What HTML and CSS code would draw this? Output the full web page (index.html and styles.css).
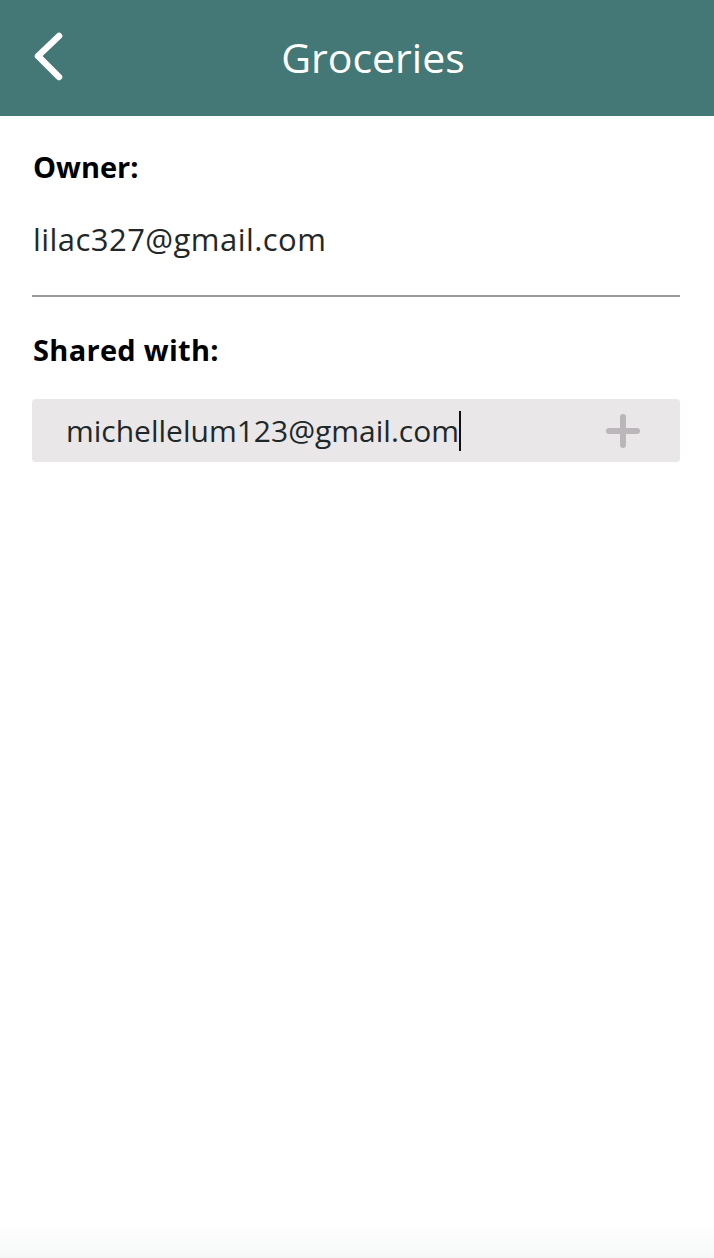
FILE: index.html
```html
<!DOCTYPE html>
<html lang="en">
<head>
<meta charset="utf-8">
<title>Groceries</title>
<link rel="stylesheet" href="styles.css">
</head>
<body>
<div class="screen">
  <header class="topbar">
    <button class="back" aria-label="Back">
      <svg width="34" height="50" viewBox="0 0 34 50"><path d="M27 4 L6 24 L27 45" fill="none" stroke="#fff" stroke-width="6.5" stroke-linecap="round" stroke-linejoin="round"/></svg>
    </button>
    <h1 class="title">Groceries</h1>
    <span class="spacer"></span>
  </header>
  <main class="content">
    <section class="owner">
      <div class="label">Owner:</div>
      <div class="email">lilac327@gmail.com</div>
    </section>
    <hr class="divider">
    <section class="shared">
      <div class="label">Shared with:</div>
      <div class="field">
        <span class="field-text">michellelum123@gmail.com<span class="caret"></span></span>
        <svg class="plus" width="34" height="34" viewBox="0 0 34 34"><path d="M17 3 V31 M3 17 H31" fill="none" stroke="#bbb6b9" stroke-width="6" stroke-linecap="round"/></svg>
      </div>
    </section>
  </main>
  <div class="bottom-fade"></div>
</div>
</body>
</html>
```

FILE: styles.css
```css
* { box-sizing: border-box; }
html, body { margin: 0; padding: 0; background: #fff; }
body { font-family: "Open Sans", "Noto Sans", sans-serif; color: #1f2828; }
.screen { width: 714px; height: 1258px; display: flex; flex-direction: column; }
.topbar {
  height: 116px; background: #437876; display: flex; align-items: center;
  padding: 0 0 2px 32px;
}
.back { background: none; border: 0; padding: 0; width: 40px; display: flex; align-items: center; cursor: pointer; }
.title {
  flex: 1; margin: 0; text-align: center; color: #fff; font-weight: 400;
  font-size: 41px; line-height: 56px;
}
.spacer { width: 40px; }
.content { flex: 1; padding: 33px 34px 0 32px; }
.label { font-weight: 700; font-size: 29px; line-height: 36px; color: #000; margin-left: 1px; }
.email { margin: 34px 0 0 1px; font-size: 31px; line-height: 40px; letter-spacing: 0.45px; }
.divider { border: 0; height: 2px; background: #999; margin: 36px 0 0; }
.shared .label { margin-top: 35px; letter-spacing: 0.3px; }
.field {
  margin-top: 31px; height: 63px; background: #e9e7e8; border-radius: 4px;
  display: flex; align-items: center; justify-content: space-between;
  padding: 0 40px 0 34px;
}
.field-text { font-size: 30px; line-height: 40px; display: flex; align-items: center; }
.caret { display: inline-block; width: 2px; height: 40px; background: #111; }
.bottom-fade { height: 34px; background: linear-gradient(#fff, #f6f7f7); }
```
